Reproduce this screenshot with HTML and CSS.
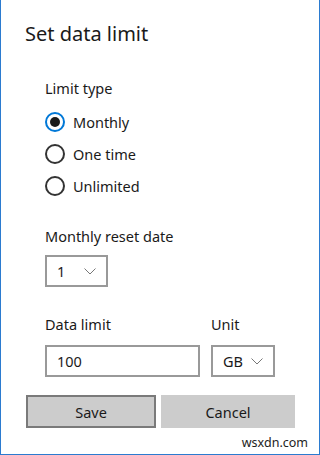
FILE: index.html
```html
<!DOCTYPE html>
<html lang="en">
<head>
  <meta charset="UTF-8">
  <meta name="viewport" content="width=device-width, initial-scale=1.0">
  <title>Set data limit</title>
  <link rel="stylesheet" href="styles.css">
</head>
<body>
  <div class="dialog">
    <h1 class="title">Set data limit</h1>

    <div class="section types">
      <div class="label">Limit type</div>
      <label class="radio">
        <input type="radio" name="limit" checked>
        <span class="dot"></span>
        Monthly
      </label>
      <label class="radio">
        <input type="radio" name="limit">
        <span class="dot"></span>
        One time
      </label>
      <label class="radio">
        <input type="radio" name="limit">
        <span class="dot"></span>
        Unlimited
      </label>
    </div>

    <div class="section reset">
      <div class="label">Monthly reset date</div>
      <div class="combo day">
        <span>1</span>
        <svg class="chev" width="12" height="7" viewBox="0 0 12 7"><path d="M0.5 0.5 L6 6 L11.5 0.5" fill="none" stroke="#777" stroke-width="1"/></svg>
      </div>
    </div>

    <div class="section limit-row">
      <div class="field">
        <div class="label">Data limit</div>
        <div class="textbox">100</div>
      </div>
      <div class="field">
        <div class="label">Unit</div>
        <div class="combo unit">
          <span>GB</span>
          <svg class="chev" width="12" height="7" viewBox="0 0 12 7"><path d="M0.5 0.5 L6 6 L11.5 0.5" fill="none" stroke="#777" stroke-width="1"/></svg>
        </div>
      </div>
    </div>

    <div class="buttons">
      <button class="btn primary">Save</button>
      <button class="btn">Cancel</button>
    </div>

    <div class="mark">wsxdn.com</div>
  </div>
</body>
</html>
```

FILE: styles.css
```css
/* Dialog shell */
body {
  margin: 0;
  font-family: "Noto Sans", "Open Sans", sans-serif;
  color: #1a1a1a;
  background: #ffffff;
}

.dialog {
  width: 320px;
  height: 455px;
  box-sizing: border-box;
  border: 1px solid #2b7bd0;
  border-top: none;
  padding: 20px 24px 0 24px;
  position: relative;
}

.title {
  font-size: 20px;
  font-weight: normal;
  line-height: 28px;
  margin: 0;
}

.section {
  padding-left: 20px;
}

.label {
  font-size: 14.5px;
  line-height: 20px;
}

/* Radio buttons */
.types {
  margin-top: 30px;
}

.types .label {
  margin-bottom: 8px;
}

.radio {
  display: flex;
  align-items: center;
  gap: 8px;
  height: 32px;
  font-size: 14.5px;
}

.radio input {
  display: none;
}

.radio .dot {
  width: 20px;
  height: 20px;
  box-sizing: border-box;
  border: 2px solid #333333;
  border-radius: 50%;
  display: flex;
  align-items: center;
  justify-content: center;
}

.radio input:checked + .dot {
  border-color: #0078d7;
}

.radio input:checked + .dot::before {
  content: "";
  width: 10px;
  height: 10px;
  border-radius: 50%;
  background: #1a1a1a;
}

/* Combo boxes and text box */
.reset {
  margin-top: 24px;
}

.reset .label {
  margin-bottom: 9px;
}

.combo,
.textbox {
  height: 32px;
  box-sizing: border-box;
  border: 2px solid #999999;
  display: flex;
  align-items: center;
  font-size: 14.5px;
  padding-left: 10px;
}

.combo {
  justify-content: space-between;
  padding-right: 10px;
}

.day {
  width: 63px;
}

.unit {
  width: 64px;
}

.chev {
  margin-top: 1px;
}

.limit-row {
  display: flex;
  gap: 11px;
  margin-top: 27px;
}

.limit-row .label {
  margin-bottom: 11px;
}

.textbox {
  width: 155px;
}

/* Buttons */
.buttons {
  display: flex;
  gap: 5px;
  margin-top: 18px;
  margin-left: 1px;
}

.btn {
  width: 135px;
  height: 33px;
  background: #cccccc;
  border: 2px solid #cccccc;
  font-family: inherit;
  font-size: 14.5px;
  color: #1a1a1a;
  padding: 0;
}

.btn.primary {
  width: 131px;
  border-color: #7a7a7a;
}

.mark {
  position: absolute;
  right: 11px;
  bottom: 3px;
  font-size: 12.5px;
  color: #222222;
}
```
